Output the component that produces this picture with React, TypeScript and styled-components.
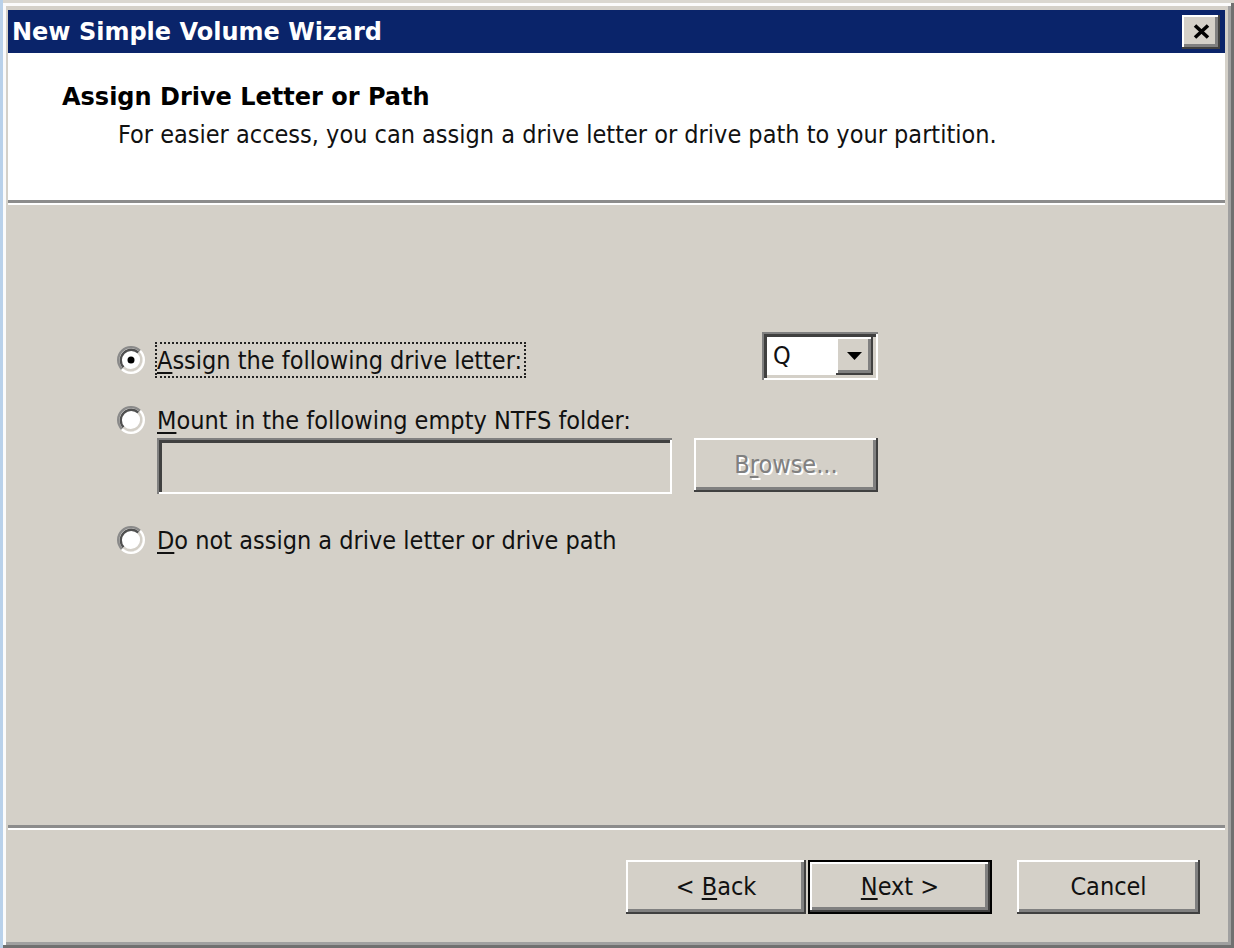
import React from "react";
import styled, { createGlobalStyle, css } from "styled-components";

const FACE = "#d4d0c8";

const GlobalStyle = createGlobalStyle`
  html, body { margin: 0; padding: 0; background: #ffffff; }
  body { font-family: "DejaVu Sans Condensed", "DejaVu Sans", sans-serif; }
  *, *::before, *::after { box-sizing: border-box; }
`;

const regular = css`
  font-family: "DejaVu Sans Condensed", "DejaVu Sans", sans-serif;
  font-stretch: condensed;
  font-size: 25px;
  line-height: 30px;
  color: #111111;
`;

const bold = css`
  font-family: "DejaVu Sans", Verdana, sans-serif;
  font-weight: bold;
  font-size: 24px;
  line-height: 28px;
`;

const raised = css`
  box-shadow: inset -2px -2px 0 #404040, inset 2px 2px 0 #ffffff,
    inset -5px -5px 0 #808080, inset 5px 5px 0 ${FACE};
`;

const sunken = css`
  box-shadow: inset 2px 2px 0 #808080, inset -2px -2px 0 #ffffff,
    inset 5px 5px 0 #404040, inset -5px -5px 0 ${FACE};
`;

const Window = styled.div`
  width: 1234px;
  height: 948px;
  display: flex;
  flex-direction: column;
  padding: 10px 9px 6px 8px;
  background: ${FACE};
  box-shadow: inset 3px 0 0 #b9d1ea, inset 0 3px 0 #dad7d0,
    inset -3px -3px 0 #707070, inset 6px 6px 0 #fbfbfb,
    inset -6px -6px 0 #a0a0a0;
`;

const TitleBar = styled.div`
  height: 43px;
  flex-shrink: 0;
  background: #0a246a;
  display: flex;
  align-items: center;
  justify-content: space-between;
  padding: 0 5px 0 4px;
`;

const TitleText = styled.div`
  ${bold};
  color: #ffffff;
`;

const CloseButton = styled.div`
  width: 38px;
  height: 34px;
  background: ${FACE};
  ${raised};
  display: flex;
  align-items: center;
  justify-content: center;
  padding-bottom: 1px;
`;

const Header = styled.div`
  height: 147px;
  flex-shrink: 0;
  background: #ffffff;
  display: flex;
  flex-direction: column;
  padding: 30px 0 0 54px;
`;

const HeaderTitle = styled.div`
  ${bold};
  color: #000000;
`;

const HeaderSub = styled.div`
  ${regular};
  margin: 9px 0 0 56px;
`;

const Rule = styled.div`
  height: 5px;
  flex-shrink: 0;
  border-top: 3px solid #8c8c8c;
  border-bottom: 2px solid #ffffff;
`;

const Body = styled.div`
  flex: 1;
  display: flex;
  flex-direction: column;
  padding: 127px 0 0 109px;
`;

const Content = styled.div`
  width: 761px;
  display: flex;
  flex-direction: column;
`;

const TopRow = styled.div`
  display: flex;
  justify-content: space-between;
  align-items: flex-start;
`;

const Option = styled.label<{ $top?: number }>`
  display: flex;
  align-items: center;
  gap: 10px;
  margin-top: ${(p) => p.$top ?? 0}px;
`;

const OptionText = styled.span<{ $focused?: boolean }>`
  ${regular};
  padding: 2px 2px 0 0;
  border: 2px dotted ${(p) => (p.$focused ? "#222222" : "transparent")};
`;

const Key = styled.u`
  text-decoration-thickness: 2px;
  text-underline-offset: 3px;
`;

const Combo = styled.div`
  width: 116px;
  height: 48px;
  background: #ffffff;
  ${sunken};
  padding: 5px;
  display: flex;
`;

const ComboValue = styled.div`
  ${regular};
  flex: 1;
  display: flex;
  align-items: center;
  padding-left: 6px;
`;

const ComboButton = styled.div`
  width: 37px;
  background: ${FACE};
  ${raised};
  display: flex;
  align-items: center;
  justify-content: center;
`;

const FieldRow = styled.div`
  display: flex;
  gap: 22px;
  padding-left: 40px;
`;

const TextField = styled.div`
  width: 515px;
  height: 56px;
  background: ${FACE};
  ${sunken};
`;

const PushButton = styled.div<{ $width: number; $default?: boolean; $disabled?: boolean }>`
  width: ${(p) => p.$width}px;
  height: 54px;
  flex-shrink: 0;
  background: ${FACE};
  ${raised};
  border: ${(p) => (p.$default ? "2px solid #000000" : "none")};
  display: flex;
  align-items: center;
  justify-content: center;
  ${regular};
  ${(p) =>
    p.$disabled &&
    css`
      color: #808080;
      text-shadow: 2px 2px 0 #ffffff;
    `}
`;

const ButtonLabel = styled.span`
  white-space: pre;
`;

const Footer = styled.div`
  height: 112px;
  flex-shrink: 0;
  display: flex;
  justify-content: flex-end;
  align-items: flex-start;
  padding: 30px 25px 0 0;
`;

const ButtonGap = styled.div<{ $w: number }>`
  width: ${(p) => p.$w}px;
  flex-shrink: 0;
`;

const Radio: React.FC<{ checked?: boolean }> = ({ checked }) => (
  <svg width="28" height="28" viewBox="0 0 12 12" style={{ flexShrink: 0 }}>
    <circle cx="6" cy="6" r="5" fill="#ffffff" />
    <path d="M2.11 9.89 A5.5 5.5 0 0 1 9.89 2.11" fill="none" stroke="#8a8a8a" strokeWidth="1" />
    <path d="M9.89 2.11 A5.5 5.5 0 0 1 2.11 9.89" fill="none" stroke="#ffffff" strokeWidth="1" />
    <path d="M2.82 9.18 A4.5 4.5 0 0 1 9.18 2.82" fill="none" stroke="#505050" strokeWidth="1" />
    <path d="M9.18 2.82 A4.5 4.5 0 0 1 2.82 9.18" fill="none" stroke="#d4d0c8" strokeWidth="1" />
    {checked && <circle cx="6" cy="6" r="1.5" fill="#000000" />}
  </svg>
);

const CloseGlyph = () => (
  <svg width="17" height="15" viewBox="0 0 17 15">
    <path d="M2 1.5 L15 13.5 M15 1.5 L2 13.5" stroke="#000000" strokeWidth="3.6" fill="none" />
  </svg>
);

const ArrowGlyph = () => (
  <svg width="15" height="8" viewBox="0 0 15 8">
    <path d="M0 0 H15 L7.5 8 Z" fill="#000000" />
  </svg>
);

export default function App() {
  return (
    <>
      <GlobalStyle />
      <Window>
        <TitleBar>
          <TitleText>New Simple Volume Wizard</TitleText>
          <CloseButton>
            <CloseGlyph />
          </CloseButton>
        </TitleBar>
        <Header>
          <HeaderTitle>Assign Drive Letter or Path</HeaderTitle>
          <HeaderSub>
            For easier access, you can assign a drive letter or drive path to your partition.
          </HeaderSub>
        </Header>
        <Rule />
        <Body>
          <Content>
            <TopRow>
              <Option $top={10}>
                <Radio checked />
                <OptionText $focused>
                  <Key>A</Key>ssign the following drive letter:
                </OptionText>
              </Option>
              <Combo>
                <ComboValue>Q</ComboValue>
                <ComboButton>
                  <ArrowGlyph />
                </ComboButton>
              </Combo>
            </TopRow>
            <Option $top={22}>
              <Radio />
              <OptionText>
                <Key>M</Key>ount in the following empty NTFS folder:
              </OptionText>
            </Option>
            <FieldRow>
              <TextField />
              <PushButton $width={184} $disabled>
                <ButtonLabel>
                  B<Key>r</Key>owse...
                </ButtonLabel>
              </PushButton>
            </FieldRow>
            <Option $top={28}>
              <Radio />
              <OptionText>
                <Key>D</Key>o not assign a drive letter or drive path
              </OptionText>
            </Option>
          </Content>
        </Body>
        <Rule />
        <Footer>
          <PushButton $width={180}>
            <ButtonLabel>
              {"< "}
              <Key>B</Key>ack
            </ButtonLabel>
          </PushButton>
          <ButtonGap $w={2} />
          <PushButton $width={184} $default>
            <ButtonLabel>
              <Key>N</Key>
              {"ext >"}
            </ButtonLabel>
          </PushButton>
          <ButtonGap $w={25} />
          <PushButton $width={183}>
            <ButtonLabel>Cancel</ButtonLabel>
          </PushButton>
        </Footer>
      </Window>
    </>
  );
}
